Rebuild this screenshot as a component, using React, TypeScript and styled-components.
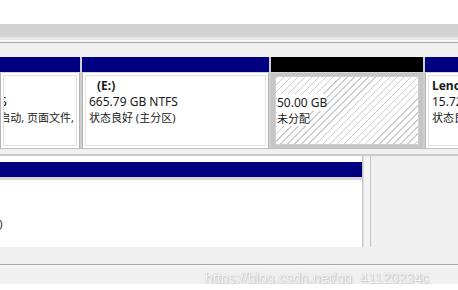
import styled, { createGlobalStyle } from "styled-components";

const GlobalStyle = createGlobalStyle`
	html, body {
		margin: 0;
		padding: 0;
		background: #ffffff;
	}
	body {
		font-family: "Noto Sans", "Noto Sans CJK SC", sans-serif;
	}
`;

const Janela = styled.div`
	width: 458px;
	height: 290px;
	overflow: hidden;
	display: flex;
	flex-direction: column;
	background: #ffffff;
`;

const TopoBranco = styled.div`
	height: 24px;
	background: #ffffff;
`;

const FaixaCinza = styled.div`
	height: 13px;
	background: #d2d2d2;
	border-bottom: 3px solid #e6e6e6;
`;

const LinhaClara = styled.div`
	height: 2px;
	background: #f8f8f8;
	border-bottom: 1px solid #a9a9a9;
`;

const AreaDiscos = styled.div`
	background: #f0f0f0;
	padding-top: 14px;
	display: flex;
	flex-direction: column;
`;

const LinhaDisco = styled.div`
	display: flex;
	gap: 2px;
	height: 91px;
	background: #cfcfcf;
	border-bottom: 1px solid #bdbdbd;
`;

const Particao = styled.div<{ $largura: number }>`
	flex: 0 0 ${(p) => p.$largura}px;
	display: flex;
	flex-direction: column;
	overflow: hidden;
`;

const Cabecalho = styled.div<{ $cor: string }>`
	height: 15px;
	flex: none;
	background: ${(p) => p.$cor};
	border-bottom: 1px solid #d4d4d4;
`;

const Corpo = styled.div<{ $selecionado?: boolean }>`
	flex: 1;
	background: ${(p) => (p.$selecionado ? "#c6c6c6" : "#ffffff")};
	padding: ${(p) => (p.$selecionado ? "3px" : "2px")};
	border-left: 1px solid ${(p) => (p.$selecionado ? "#c6c6c6" : "#b4b4b4")};
	border-right: 1px solid ${(p) => (p.$selecionado ? "#c6c6c6" : "#b4b4b4")};
	display: flex;
	overflow: hidden;
`;

const Interno = styled.div<{ $hachurado?: boolean }>`
	flex: 1;
	border: 1px solid ${(p) => (p.$hachurado ? "#d0d0d0" : "#e2e2e2")};
	background: ${(p) =>
		p.$hachurado
			? "repeating-linear-gradient(135deg, #cbcbcb 0 1px, #ffffff 1px 5px)"
			: "#ffffff"};
	padding: 2px 0 0 ${(p) => (p.$hachurado ? 1 : 3)}px;
	overflow: hidden;
	white-space: nowrap;
`;

const Linha = styled.div<{ $recuo?: number; $negrito?: boolean; $cjk?: boolean }>`
	font-size: ${(p) => (p.$cjk ? 11 : 12)}px;
	line-height: 16px;
	height: 16px;
	color: #1a1a1a;
	font-weight: ${(p) => (p.$negrito ? 700 : 400)};
	margin-left: ${(p) => p.$recuo ?? 0}px;
`;

const TextoFundo = styled.span`
	background: #ffffff;
`;

const Separador = styled.div`
	height: 5px;
	background: #f0f0f0;
	border-bottom: 2px solid #cacaca;
`;

const SegundaLinha = styled.div`
	display: flex;
	height: 91px;
`;

const DiscoDois = styled.div`
	flex: 0 0 362px;
	background: #ffffff;
	padding-top: 6px;
	display: flex;
	flex-direction: column;
	border-right: 1px solid #c8c8c8;
	overflow: hidden;
`;

const CorpoDois = styled.div`
	flex: 1;
	border-top: 2px solid #d6d6d6;
	padding-top: 36px;
	white-space: nowrap;
`;

const Divisoria = styled.div`
	flex: 0 0 6px;
	background: #f4f4f4;
	border-left: 1px solid #dcdcdc;
	border-right: 1px solid #c4c4c4;
`;

const AreaVazia = styled.div`
	flex: 1;
	background: #f0f0f0;
`;

const Rodape = styled.div`
	height: 17px;
	background: #f0f0f0;
	border-bottom: 1px solid #a6a6a6;
`;

const BarraStatus = styled.div`
	height: 18px;
	background: #f0f0f0;
	border-top: 1px solid #fbfbfb;
	padding-left: 205px;
	overflow: hidden;
	white-space: nowrap;
`;

const MarcaDagua = styled.span`
	font-family: "Liberation Sans", Arial, sans-serif;
	font-size: 14px;
	line-height: 15px;
	letter-spacing: 0.1px;
	color: rgba(255, 255, 255, 0.92);
	text-shadow: 0 0 1px rgba(0, 0, 0, 0.3), 1px 1px 1px rgba(0, 0, 0, 0.12);
`;

const FimBranco = styled.div`
	flex: 1;
	background: #ffffff;
`;

export default function App() {
	return (
		<>
			<GlobalStyle />
			<Janela>
				<TopoBranco />
				<FaixaCinza />
				<LinhaClara />
				<AreaDiscos>
					<LinhaDisco>
						<Particao $largura={80}>
							<Cabecalho $cor="#000080" />
							<Corpo>
								<Interno>
									<Linha $negrito $recuo={-70}>(C:)</Linha>
									<Linha $recuo={-89}>100.00 GB NTFS</Linha>
									<Linha $cjk $recuo={-58}>状态良好 (启动, 页面文件, 故障转储, 主分区)</Linha>
								</Interno>
							</Corpo>
						</Particao>
						<Particao $largura={187}>
							<Cabecalho $cor="#000080" />
							<Corpo>
								<Interno>
									<Linha $negrito $recuo={8}>(E:)</Linha>
									<Linha>665.79 GB NTFS</Linha>
									<Linha $cjk>状态良好 (主分区)</Linha>
								</Interno>
							</Corpo>
						</Particao>
						<Particao $largura={152}>
							<Cabecalho $cor="#000000" />
							<Corpo $selecionado>
								<Interno $hachurado>
									<Linha />
									<Linha>
										<TextoFundo>50.00 GB</TextoFundo>
									</Linha>
									<Linha $cjk>
										<TextoFundo>未分配</TextoFundo>
									</Linha>
								</Interno>
							</Corpo>
						</Particao>
						<Particao $largura={140}>
							<Cabecalho $cor="#000080" />
							<Corpo>
								<Interno>
									<Linha $negrito>Lenovo (D:)</Linha>
									<Linha>15.72 GB NTFS</Linha>
									<Linha $cjk>状态良好 (主分区)</Linha>
								</Interno>
							</Corpo>
						</Particao>
					</LinhaDisco>
					<Separador />
					<SegundaLinha>
						<DiscoDois>
							<Cabecalho $cor="#000080" />
							<CorpoDois>
								<Linha $cjk $recuo={-84}>状态良好 (主分区)</Linha>
							</CorpoDois>
						</DiscoDois>
						<Divisoria />
						<AreaVazia />
					</SegundaLinha>
				</AreaDiscos>
				<Rodape />
				<BarraStatus>
					<MarcaDagua>https://blog.csdn.net/qq_41120234c</MarcaDagua>
				</BarraStatus>
				<FimBranco />
			</Janela>
		</>
	);
}
